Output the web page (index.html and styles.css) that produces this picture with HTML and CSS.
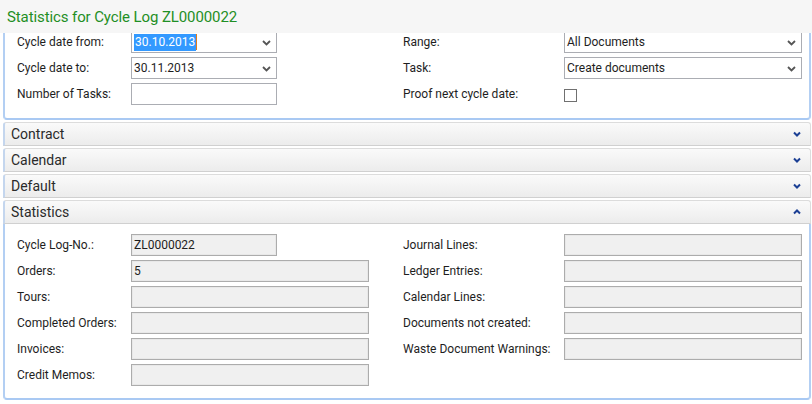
FILE: index.html
```html
<!DOCTYPE html>
<html>
<head>
<meta charset="utf-8">
<link rel="stylesheet" href="styles.css">
</head>
<body>
<div class="titlebar"><span class="title">Statistics for Cycle Log ZL0000022</span></div>
<div class="viewport">
  <div class="scroll">
    <section class="panel open first">
      <div class="body">
        <div class="col">
          <div class="row"><span class="lbl">Cycle date from:</span><div class="box edit short dd"><span class="sel">30.10.2013</span><span class="caret"></span><svg class="arr" width="9" height="6" viewBox="0 0 9 6"><polyline points="1,1 4.5,4.5 8,1" fill="none" stroke="#555" stroke-width="1.8"/></svg></div></div>
          <div class="row"><span class="lbl">Cycle date to:</span><div class="box edit short dd"><span class="val">30.11.2013</span><svg class="arr" width="9" height="6" viewBox="0 0 9 6"><polyline points="1,1 4.5,4.5 8,1" fill="none" stroke="#555" stroke-width="1.8"/></svg></div></div>
          <div class="row"><span class="lbl">Number of Tasks:</span><div class="box edit short"></div></div>
        </div>
        <div class="col right">
          <div class="row"><span class="lbl">Range:</span><div class="box edit dd"><span class="val">All Documents</span><svg class="arr" width="9" height="6" viewBox="0 0 9 6"><polyline points="1,1 4.5,4.5 8,1" fill="none" stroke="#555" stroke-width="1.8"/></svg></div></div>
          <div class="row"><span class="lbl">Task:</span><div class="box edit dd"><span class="val">Create documents</span><svg class="arr" width="9" height="6" viewBox="0 0 9 6"><polyline points="1,1 4.5,4.5 8,1" fill="none" stroke="#555" stroke-width="1.8"/></svg></div></div>
          <div class="row"><span class="lbl">Proof next cycle date:</span><span class="check"></span></div>
        </div>
      </div>
    </section>
    <div class="hdr"><span>Contract</span><svg class="chev" width="8" height="6" viewBox="0 0 8 6"><polyline points="1,1.5 4,4.5 7,1.5" fill="none" stroke="#1b3f94" stroke-width="2"/></svg></div>
    <div class="hdr"><span>Calendar</span><svg class="chev" width="8" height="6" viewBox="0 0 8 6"><polyline points="1,1.5 4,4.5 7,1.5" fill="none" stroke="#1b3f94" stroke-width="2"/></svg></div>
    <div class="hdr"><span>Default</span><svg class="chev" width="8" height="6" viewBox="0 0 8 6"><polyline points="1,1.5 4,4.5 7,1.5" fill="none" stroke="#1b3f94" stroke-width="2"/></svg></div>
    <div class="hdr"><span>Statistics</span><svg class="chev" width="8" height="6" viewBox="0 0 8 6"><polyline points="1,4.5 4,1.5 7,4.5" fill="none" stroke="#1b3f94" stroke-width="2"/></svg></div>
    <section class="panel open stats">
      <div class="body">
        <div class="col">
          <div class="row"><span class="lbl">Cycle Log-No.:</span><div class="box ro short"><span class="val">ZL0000022</span></div></div>
          <div class="row"><span class="lbl">Orders:</span><div class="box ro"><span class="val">5</span></div></div>
          <div class="row"><span class="lbl">Tours:</span><div class="box ro"></div></div>
          <div class="row"><span class="lbl">Completed Orders:</span><div class="box ro"></div></div>
          <div class="row"><span class="lbl">Invoices:</span><div class="box ro"></div></div>
          <div class="row"><span class="lbl">Credit Memos:</span><div class="box ro"></div></div>
        </div>
        <div class="col right">
          <div class="row"><span class="lbl">Journal Lines:</span><div class="box ro"></div></div>
          <div class="row"><span class="lbl">Ledger Entries:</span><div class="box ro"></div></div>
          <div class="row"><span class="lbl">Calendar Lines:</span><div class="box ro"></div></div>
          <div class="row"><span class="lbl">Documents not created:</span><div class="box ro"></div></div>
          <div class="row"><span class="lbl">Waste Document Warnings:</span><div class="box ro"></div></div>
        </div>
      </div>
    </section>
  </div>
</div>
</body>
</html>
```

FILE: styles.css
```css
* { box-sizing: border-box; }
html, body { margin: 0; padding: 0; background: #ffffff; }
body {
  width: 812px; height: 404px; overflow: hidden;
  font-family: Roboto, "Noto Sans", sans-serif;
  font-size: 12px; color: #1e1e1e;
}
.titlebar {
  height: 33px; background: #f6f6f6;
  padding: 0 0 0 7px; display: flex; align-items: center;
  position: relative; z-index: 2;
}
.title { color: #1f8f25; font-size: 15px; letter-spacing: -0.1px; }
.viewport { height: 371px; overflow: hidden; padding: 0 1px 0 3px; }
.scroll { margin-top: -2px; }
.panel {
  background: #fff;
  border-left: 2px solid #b3cff3;
  border-right: 2px solid #b3cff3;
  border-bottom: 2px solid #a9c9f3;
  border-radius: 0 0 4px 4px;
}
.panel .body {
  display: flex; gap: 34px;
  padding: 0 7px 13px 12px;
}
.panel.stats .body { padding: 10px 7px 12px 12px; }
.col { display: flex; flex-direction: column; gap: 4px; width: 352px; }
.col.right { width: 399px; }
.row { display: flex; align-items: center; height: 22px; }
.lbl { width: 114px; flex: none; white-space: nowrap; }
.col.right .lbl { width: 161px; }
.box {
  height: 22px; width: 238px; flex: none;
  border: 1px solid #ababab;
  display: flex; align-items: center; padding: 0 0 0 2px;
  position: relative;
}
.box.short { width: 146px; }
.box.edit { background: #fff; border-color: #abadb3; }
.box.ro { background: #f0f0f0; border-color: #acacac; box-shadow: inset 0 0 0 1px #e8e8e8; }
.sel { background: #3399ff; color: #fff; padding: 0 1px 1px 1px; line-height: 16px; }
.caret { width: 1px; height: 16px; background: #e07a1e; }
.arr { position: absolute; right: 5px; top: 8px; }
.check { width: 13px; height: 13px; border: 1px solid #707070; background: #fff; display: block; margin-top: 2px; }
.hdr {
  height: 24px; margin-top: 2px;
  display: flex; align-items: center; justify-content: space-between;
  padding: 0 9px 0 6px;
  font-size: 14px; color: #2a2a2a;
  background: linear-gradient(#fafafa, #ececec);
  border: 1px solid #dcdcdc;
  border-left: 2px solid #c4d6ee;
  border-bottom: 1px solid #d0d0d0;
  border-radius: 3px 3px 0 0;
}
.chev { display: block; }
```
